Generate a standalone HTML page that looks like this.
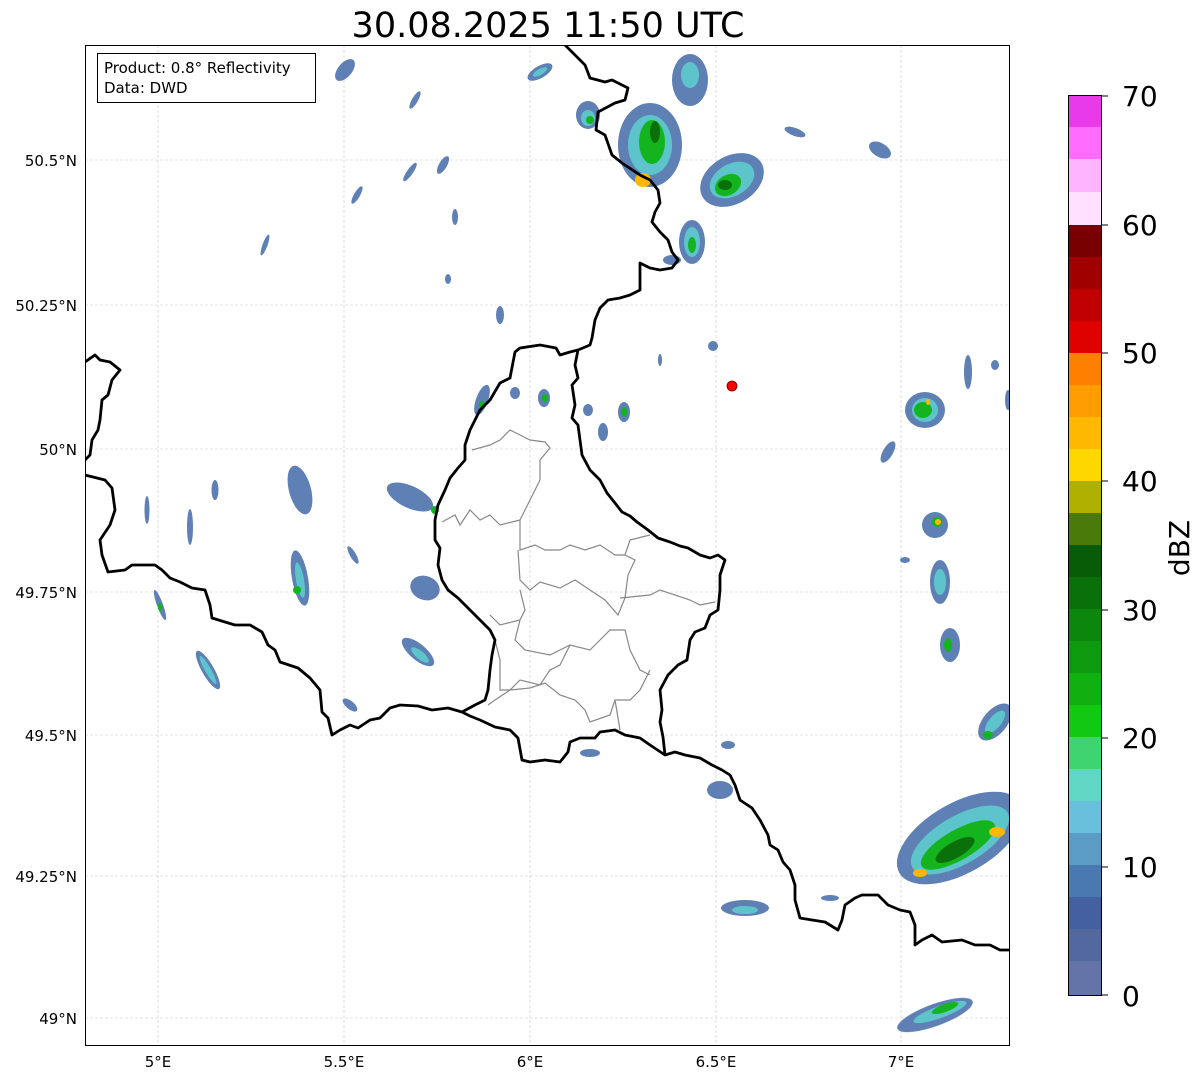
<!DOCTYPE html>
<html><head><meta charset="utf-8"><style>
html,body{margin:0;padding:0;background:#fff;width:1202px;height:1081px;overflow:hidden}
svg{display:block;font-family:"DejaVu Sans","Liberation Sans",sans-serif}
</style></head><body>
<svg width="1202" height="1081" viewBox="0 0 1202 1081">
<defs>
<clipPath id="c"><rect x="85" y="45" width="925" height="1001"/></clipPath>
</defs>
<text x="548" y="37" font-size="35" text-anchor="middle" fill="#000">30.08.2025 11:50 UTC</text>
<g clip-path="url(#c)">
<g stroke="#c8c8c8" stroke-width="0.6" stroke-dasharray="3,2">
<line x1="158" y1="45" x2="158" y2="1046"/><line x1="344" y1="45" x2="344" y2="1046"/><line x1="530" y1="45" x2="530" y2="1046"/><line x1="716" y1="45" x2="716" y2="1046"/><line x1="901" y1="45" x2="901" y2="1046"/>
<line x1="85" y1="160" x2="1010" y2="160"/><line x1="85" y1="305" x2="1010" y2="305"/><line x1="85" y1="449" x2="1010" y2="449"/><line x1="85" y1="592" x2="1010" y2="592"/><line x1="85" y1="735" x2="1010" y2="735"/><line x1="85" y1="876" x2="1010" y2="876"/><line x1="85" y1="1018" x2="1010" y2="1018"/>
</g>
<g>
<g fill="#4c72ad" opacity="0.9">
<ellipse cx="540" cy="72" rx="14" ry="6" transform="rotate(-30 540 72)"/>
<ellipse cx="345" cy="70" rx="7" ry="13" transform="rotate(40 345 70)"/>
<ellipse cx="415" cy="100" rx="3" ry="10" transform="rotate(30 415 100)"/>
<ellipse cx="588" cy="115" rx="12" ry="14"/>
<ellipse cx="690" cy="80" rx="18" ry="26"/>
<ellipse cx="650" cy="145" rx="32" ry="42"/>
<ellipse cx="732" cy="180" rx="34" ry="24" transform="rotate(-30 732 180)"/>
<ellipse cx="692" cy="242" rx="13" ry="22"/>
<ellipse cx="672" cy="260" rx="9" ry="5"/>
<ellipse cx="795" cy="132" rx="11" ry="4" transform="rotate(20 795 132)"/>
<ellipse cx="880" cy="150" rx="12" ry="7" transform="rotate(30 880 150)"/>
<ellipse cx="410" cy="172" rx="3" ry="11" transform="rotate(35 410 172)"/>
<ellipse cx="443" cy="165" rx="4" ry="10" transform="rotate(30 443 165)"/>
<ellipse cx="357" cy="195" rx="3" ry="10" transform="rotate(30 357 195)"/>
<ellipse cx="455" cy="217" rx="3" ry="8"/>
<ellipse cx="265" cy="245" rx="2.5" ry="11" transform="rotate(20 265 245)"/>
<ellipse cx="448" cy="279" rx="3" ry="5"/>
<ellipse cx="500" cy="315" rx="4" ry="9"/>
<ellipse cx="482" cy="400" rx="6" ry="16" transform="rotate(20 482 400)"/>
<ellipse cx="515" cy="393" rx="5" ry="6"/>
<ellipse cx="544" cy="398" rx="6" ry="9"/>
<ellipse cx="588" cy="410" rx="5" ry="6"/>
<ellipse cx="603" cy="432" rx="5" ry="9"/>
<ellipse cx="624" cy="412" rx="6" ry="10"/>
<ellipse cx="713" cy="346" rx="5" ry="5"/>
<ellipse cx="660" cy="360" rx="2" ry="6"/>
<ellipse cx="925" cy="410" rx="20" ry="18"/>
<ellipse cx="968" cy="372" rx="4" ry="17"/>
<ellipse cx="888" cy="452" rx="5" ry="12" transform="rotate(30 888 452)"/>
<ellipse cx="147" cy="510" rx="2.5" ry="14"/>
<ellipse cx="215" cy="490" rx="3.5" ry="10"/>
<ellipse cx="190" cy="527" rx="3" ry="18"/>
<ellipse cx="300" cy="490" rx="11" ry="25" transform="rotate(-15 300 490)"/>
<ellipse cx="410" cy="497" rx="25" ry="11" transform="rotate(25 410 497)"/>
<ellipse cx="300" cy="578" rx="8" ry="28" transform="rotate(-10 300 578)"/>
<ellipse cx="353" cy="555" rx="3" ry="10" transform="rotate(-30 353 555)"/>
<ellipse cx="425" cy="588" rx="15" ry="12" transform="rotate(20 425 588)"/>
<ellipse cx="160" cy="605" rx="3" ry="16" transform="rotate(-20 160 605)"/>
<ellipse cx="208" cy="670" rx="6" ry="22" transform="rotate(-30 208 670)"/>
<ellipse cx="418" cy="652" rx="20" ry="8" transform="rotate(40 418 652)"/>
<ellipse cx="350" cy="705" rx="9" ry="4" transform="rotate(40 350 705)"/>
<ellipse cx="590" cy="753" rx="10" ry="4"/>
<ellipse cx="728" cy="745" rx="7" ry="4"/>
<ellipse cx="720" cy="790" rx="13" ry="9"/>
<ellipse cx="745" cy="908" rx="24" ry="8"/>
<ellipse cx="830" cy="898" rx="9" ry="3"/>
<ellipse cx="935" cy="525" rx="13" ry="13"/>
<ellipse cx="905" cy="560" rx="5" ry="3"/>
<ellipse cx="940" cy="582" rx="10" ry="22"/>
<ellipse cx="950" cy="645" rx="10" ry="17"/>
<ellipse cx="995" cy="722" rx="12" ry="22" transform="rotate(40 995 722)"/>
<ellipse cx="960" cy="838" rx="70" ry="35" transform="rotate(-30 960 838)"/>
<ellipse cx="935" cy="1015" rx="40" ry="11" transform="rotate(-20 935 1015)"/>
<ellipse cx="1008" cy="400" rx="3" ry="10"/>
<ellipse cx="995" cy="365" rx="4" ry="5"/>
</g>
<g fill="#5ec4cc">
<ellipse cx="540" cy="72" rx="8" ry="3" transform="rotate(-30 540 72)"/>
<ellipse cx="650" cy="145" rx="22" ry="30"/>
<ellipse cx="732" cy="180" rx="24" ry="16" transform="rotate(-30 732 180)"/>
<ellipse cx="690" cy="75" rx="9" ry="13"/>
<ellipse cx="692" cy="242" rx="8" ry="15"/>
<ellipse cx="925" cy="410" rx="13" ry="12"/>
<ellipse cx="300" cy="580" rx="4" ry="18" transform="rotate(-10 300 580)"/>
<ellipse cx="208" cy="670" rx="3" ry="16" transform="rotate(-30 208 670)"/>
<ellipse cx="420" cy="655" rx="11" ry="4" transform="rotate(40 420 655)"/>
<ellipse cx="960" cy="840" rx="55" ry="24" transform="rotate(-30 960 840)"/>
<ellipse cx="940" cy="1012" rx="28" ry="6" transform="rotate(-20 940 1012)"/>
<ellipse cx="940" cy="582" rx="6" ry="13"/>
<ellipse cx="995" cy="722" rx="6" ry="14" transform="rotate(40 995 722)"/>
<ellipse cx="588" cy="118" rx="7" ry="8"/>
<ellipse cx="745" cy="910" rx="13" ry="4"/>
</g>
<g fill="#14b41e">
<ellipse cx="652" cy="142" rx="13" ry="22"/>
<ellipse cx="728" cy="185" rx="14" ry="10" transform="rotate(-30 728 185)"/>
<ellipse cx="692" cy="245" rx="4" ry="8"/>
<ellipse cx="923" cy="410" rx="9" ry="8"/>
<ellipse cx="958" cy="845" rx="42" ry="15" transform="rotate(-30 958 845)"/>
<ellipse cx="945" cy="1008" rx="14" ry="4" transform="rotate(-20 945 1008)"/>
<ellipse cx="937" cy="522" rx="5" ry="5"/>
<ellipse cx="948" cy="645" rx="4" ry="7"/>
<ellipse cx="988" cy="735" rx="5" ry="4"/>
<ellipse cx="545" cy="398" rx="3" ry="4"/>
<ellipse cx="624" cy="412" rx="3" ry="5"/>
<ellipse cx="297" cy="590" rx="4" ry="4"/>
<ellipse cx="435" cy="510" rx="4" ry="4"/>
<ellipse cx="482" cy="405" rx="3" ry="4"/>
<ellipse cx="160" cy="607" rx="2" ry="4"/>
<ellipse cx="590" cy="120" rx="4" ry="4"/>
</g>
<g fill="#0a700a">
<ellipse cx="655" cy="132" rx="5" ry="11"/>
<ellipse cx="725" cy="185" rx="7" ry="5"/>
<ellipse cx="955" cy="850" rx="22" ry="8" transform="rotate(-30 955 850)"/>
</g>
<g fill="#ffb800">
<ellipse cx="643" cy="180" rx="8" ry="7"/>
<ellipse cx="997" cy="832" rx="8" ry="5"/>
<ellipse cx="920" cy="873" rx="7" ry="4"/>
<ellipse cx="938" cy="522" rx="3" ry="3"/>
<ellipse cx="928" cy="402" rx="2" ry="3"/>
</g>
</g>
<g fill="none" stroke="#888" stroke-width="1.2">
<polyline points="472,450 490,445 500,440 510,430 520,435 530,440 545,442 550,448 540,460 540,480 530,500 520,520 520,550 535,545 545,550 560,550 570,545 585,550 600,545 615,555 625,555 630,540 650,535"/>
<polyline points="442,522 455,515 460,525 470,510 480,520 490,515 500,525 520,520"/>
<polyline points="518,550 520,580 530,590 540,582 560,588 575,580 590,590 605,600 618,615 625,598 628,575 635,560 625,555"/>
<polyline points="620,598 650,595 660,590 690,600 700,605 715,602"/>
<polyline points="520,590 525,610 520,620 500,625 490,615"/>
<polyline points="520,620 515,640 525,650 550,655 570,645 590,650 600,640 610,630 625,630 630,650 640,670 650,675"/>
<polyline points="495,640 500,660 500,690 510,690 520,680 540,685 550,670 560,665 570,645"/>
<polyline points="488,705 495,700 510,690 530,688 545,683 560,695 575,700 585,710 590,722 610,715 615,700 630,700 640,690 650,670"/>
<polyline points="615,700 620,730"/>
</g>
<g fill="none" stroke="#000" stroke-width="2.8" stroke-linejoin="round">
<polyline points="565,45 575,55 585,65 590,78 605,82 612,80 628,88 625,100 615,103 598,112 596,130 605,135 612,155 622,163 640,175 650,180 658,190 660,203 655,212 652,222 660,232 668,240 672,252 678,260 672,268 660,270 650,268 640,263 640,290 630,295 620,298 608,300 600,308 595,320 592,338 590,345 578,350 575,365 578,378 572,385 575,405 572,418 578,425 580,440 582,455 590,470 600,480 607,493 615,503 622,512 630,516 637,522 648,530 658,538 670,542 680,546 688,548 700,555 710,558 718,555 725,560 720,575 720,590 718,610 710,615 705,628 695,632 690,640 687,660 678,665 668,675 660,690 662,710 660,722 663,737 665,755"/>
<polyline points="462,712 470,716 480,720 495,727 510,730 518,738 522,760 530,762 545,760 560,762 568,752 570,742 580,738 595,738 600,732 615,730 625,735 640,738 650,745 665,755 675,752 685,755 700,758 712,765 722,770 730,775 735,785 740,800 752,808 760,820 768,835 770,845 778,850 783,862 790,870 795,885 795,900 800,918 812,920 825,922 838,930 842,920 845,905 855,898 862,895 878,895 888,905 900,910 910,912 915,925 915,945 922,940 932,935 942,942 962,940 975,945 990,945 1000,950 1010,950"/>
<polyline points="578,350 570,352 560,355 556,348 540,345 520,348 515,352 510,378 500,383 490,400 480,410 470,430 465,445 465,460 458,468 450,478 445,490 438,505 435,520 435,540 440,548 438,565 442,580 448,590 458,598 470,610 480,620 490,630 495,640 492,655 490,670 488,690 485,700 475,705 462,712"/>
<polyline points="85,475 105,480 112,488 115,510 110,525 100,540 102,555 108,572 125,570 132,565 155,565 162,570 170,578 180,582 192,588 205,590 210,605 212,618 225,622 235,625 250,625 262,632 268,645 275,650 280,662 298,668 310,678 320,690 322,712 328,718 332,735 340,730 350,725 358,728 370,720 380,718 390,708 400,705 418,706 432,710 448,708 462,712"/>
<polyline points="85,362 95,355 100,360 110,362 120,370 112,380 108,395 102,400 100,420 98,430 92,440 90,455 85,460"/>
</g>
<circle cx="732" cy="386" r="5" fill="#f00" stroke="#600" stroke-width="0.8"/>
</g>
<rect x="85.5" y="45.5" width="924" height="1000" fill="none" stroke="#000" stroke-width="1"/>
<rect x="97.5" y="53.5" width="218" height="49" fill="#fff" stroke="#000" stroke-width="1"/>
<text x="104" y="73" font-size="15">Product: 0.8° Reflectivity</text>
<text x="104" y="93" font-size="15">Data: DWD</text>
<g font-size="15" text-anchor="end">
<text x="77" y="166">50.5°N</text><text x="77" y="311">50.25°N</text><text x="77" y="455">50°N</text><text x="77" y="598">49.75°N</text><text x="77" y="741">49.5°N</text><text x="77" y="882">49.25°N</text><text x="77" y="1024">49°N</text>
</g>
<g font-size="15" text-anchor="middle">
<text x="158" y="1067">5°E</text><text x="344" y="1067">5.5°E</text><text x="530" y="1067">6°E</text><text x="716" y="1067">6.5°E</text><text x="901" y="1067">7°E</text>
</g>
<g>
<rect x="1068" y="95" width="34" height="33" fill="#e83ae8"/>
<rect x="1068" y="127" width="34" height="33" fill="#ff6cff"/>
<rect x="1068" y="159" width="34" height="34" fill="#ffb4ff"/>
<rect x="1068" y="192" width="34" height="33" fill="#ffe0ff"/>
<rect x="1068" y="225" width="34" height="33" fill="#780000"/>
<rect x="1068" y="257" width="34" height="33" fill="#a00000"/>
<rect x="1068" y="289" width="34" height="33" fill="#c00000"/>
<rect x="1068" y="321" width="34" height="33" fill="#e00000"/>
<rect x="1068" y="353" width="34" height="33" fill="#ff8000"/>
<rect x="1068" y="385" width="34" height="33" fill="#ff9c00"/>
<rect x="1068" y="417" width="34" height="33" fill="#ffb800"/>
<rect x="1068" y="449" width="34" height="33" fill="#ffd700"/>
<rect x="1068" y="481" width="34" height="33" fill="#b0b000"/>
<rect x="1068" y="513" width="34" height="33" fill="#4a7a0a"/>
<rect x="1068" y="545" width="34" height="33" fill="#085c08"/>
<rect x="1068" y="577" width="34" height="33" fill="#0a700a"/>
<rect x="1068" y="609" width="34" height="33" fill="#0c860c"/>
<rect x="1068" y="641" width="34" height="33" fill="#0e9a0e"/>
<rect x="1068" y="673" width="34" height="33" fill="#10b010"/>
<rect x="1068" y="705" width="34" height="33" fill="#12c812"/>
<rect x="1068" y="737" width="34" height="33" fill="#40d470"/>
<rect x="1068" y="769" width="34" height="33" fill="#60d6c4"/>
<rect x="1068" y="801" width="34" height="33" fill="#68c0dc"/>
<rect x="1068" y="833" width="34" height="33" fill="#5a9cc4"/>
<rect x="1068" y="865" width="34" height="33" fill="#4a78b0"/>
<rect x="1068" y="897" width="34" height="33" fill="#4460a0"/>
<rect x="1068" y="929" width="34" height="33" fill="#5468a0"/>
<rect x="1068" y="961" width="34" height="35" fill="#6474a8"/>
<rect x="1068.5" y="95.5" width="33" height="900" fill="none" stroke="#000" stroke-width="1"/>
<g stroke="#000" stroke-width="1">
<line x1="1102" y1="96" x2="1108" y2="96"/><line x1="1102" y1="225" x2="1108" y2="225"/><line x1="1102" y1="353" x2="1108" y2="353"/><line x1="1102" y1="481" x2="1108" y2="481"/><line x1="1102" y1="610" x2="1108" y2="610"/><line x1="1102" y1="738" x2="1108" y2="738"/><line x1="1102" y1="867" x2="1108" y2="867"/><line x1="1102" y1="995" x2="1108" y2="995"/>
</g>
<g font-size="28">
<text x="1122" y="106">70</text><text x="1122" y="235">60</text><text x="1122" y="363">50</text><text x="1122" y="491">40</text><text x="1122" y="620">30</text><text x="1122" y="748">20</text><text x="1122" y="877">10</text><text x="1122" y="1006">0</text>
</g>
<text x="0" y="0" font-size="28" transform="translate(1189 548) rotate(-90)" text-anchor="middle">dBZ</text>
</g>
</svg>
</body></html>
